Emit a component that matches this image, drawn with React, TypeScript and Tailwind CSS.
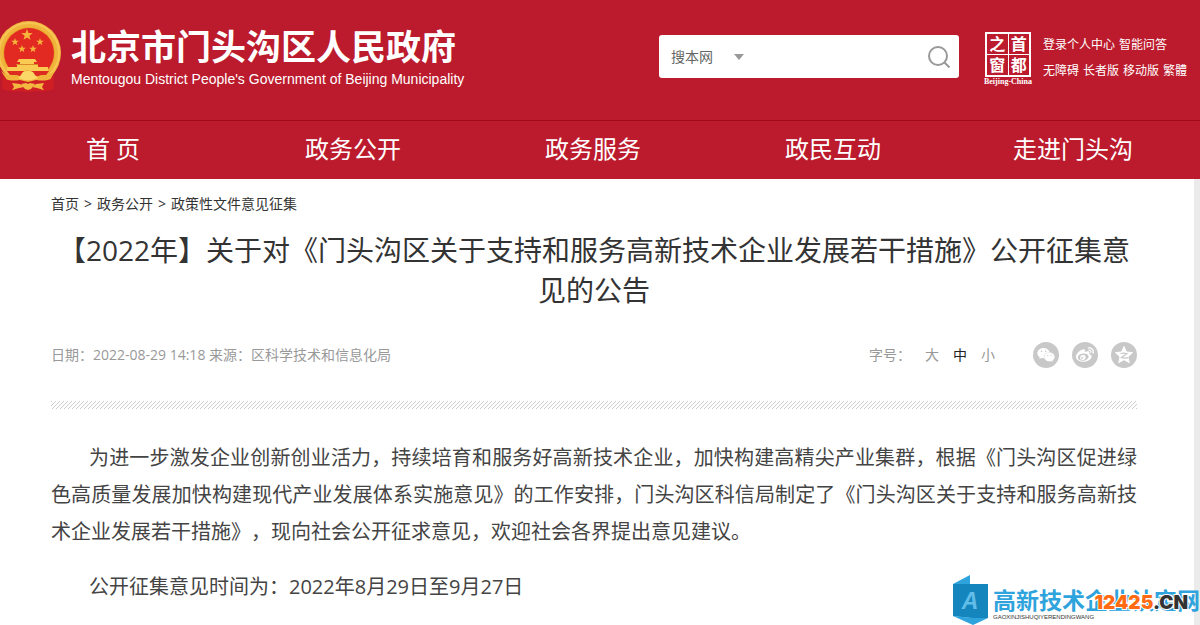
import React, { useState } from "react";
import { FaWeibo, FaWeixin } from "react-icons/fa";

const navItems = ["首 页", "政务公开", "政务服务", "政民互动", "走进门头沟"];
const crumbs = ["首页", "政务公开", "政策性文件意见征集"];
const topLinks = [
  ["登录个人中心", "智能问答"],
  ["无障碍", "长者版", "移动版", "繁體"],
];
const sizes = ["大", "中", "小"];

function star(cx: number, cy: number, r: number) {
  return Array.from({ length: 10 }, (_, i) => {
    const a = (Math.PI / 5) * i - Math.PI / 2;
    const d = i % 2 ? r * 0.4 : r;
    return `${cx + d * Math.cos(a)},${cy + d * Math.sin(a)}`;
  }).join(" ");
}

function Emblem() {
  return (
    <svg viewBox="0 0 62 74" className="h-[74px] w-[62px] shrink-0" aria-hidden="true">
      <path d="M3 46L2 62l1 8 12 1 13 1 13-1 11-1 2-8-1-16z" fill="#cf1f24" />
      <circle cx="29" cy="33" r="32" fill="#f0b43c" />
      <circle cx="29" cy="33" r="30" fill="none" stroke="#f6c653" strokeWidth="2" />
      <circle cx="29" cy="33" r="26" fill="#e8a52c" />
      <circle cx="29" cy="33" r="25" fill="#e32a22" />
      <g fill="#f6b63c">
        <polygon points={star(27, 15, 6)} />
        <polygon points={star(15, 22, 4)} />
        <polygon points={star(40, 22, 4)} />
        <polygon points={star(22, 29, 4)} />
        <polygon points={star(33, 29, 4)} />
      </g>
      <g fill="#f9cb52">
        <path d="M19 39h16l2 3H17zM20 42h14v2H20zM17 44h21v6H17z" />
        <path d="M7 47h41v4H7z" />
      </g>
      <path d="M16 44h22v1H16z" fill="#d98a25" />
      <path d="M7 51h42l-3 4H10z" fill="#dd2b22" />
      <path d="M1 51c6 5 13 6 20 5 1-4 4-6 7-6s5 2 6 6c7 1 14 0 21-5l-5 9-12 3H18L7 60z" fill="#f0b43c" />
      <path d="M18 58l3-3 2-3 4-1h2l4 1 2 3 3 3-6 2h-8z" fill="#fbd768" />
      <path d="M3 58c6 3 10 3 17 2l8 2 8-2c7 1 11 1 17-2l1 11c-8 3-14 3-20 1l-6-2-6 2c-6 2-12 2-20-1z" fill="#cf1f24" />
      <path d="M12 63l8 1 4 3-5 1-7 2 2-3zM44 63l-8 1-4 3 5 1 7 2-2-3zM21 64l5-1 2 1 2-1 5 1-4 5-3 1-3-1z" fill="#f3b840" />
    </svg>
  );
}

function QzoneIcon() {
  return (
    <svg viewBox="0 0 20 20" className="h-5 w-5" aria-hidden="true">
      <path
        d="M10 1.5 L12.4 7 L18.5 7.6 L14 11.7 L15.3 17.7 L10 14.7 L4.7 17.7 L6 11.7 L1.5 7.6 L7.6 7Z"
        fill="#fff"
        stroke="#fff"
        strokeLinejoin="round"
      />
      <path d="M6.500 8.500c2.500-.5 4.500-.5 6.500 0L7.500 12.600c2 .6 4.500 .6 7 0" fill="none" stroke="#c8c8c8" strokeWidth="1.2" />
    </svg>
  );
}

function CapitalWindow() {
  return (
    <a href="#" aria-label="首都之窗" className="flex w-[50px] flex-col items-center text-white">
      <span className="grid h-[45px] w-[46px] grid-cols-2 grid-rows-2 gap-px border-2 border-white bg-white text-[16px] leading-5 font-bold">
        {["之", "首", "窗", "都"].map((c) => (
          <span key={c} className="bg-[#bc1b2d] text-center">
            {c}
          </span>
        ))}
      </span>
      <span className="font-['Liberation_Serif',serif] text-[8px] leading-[10px] font-bold whitespace-nowrap">
        Beijing-China
      </span>
    </a>
  );
}

function SearchBox() {
  const [query, setQuery] = useState("");

  return (
    <form
      onSubmit={(e) => e.preventDefault()}
      className="flex h-[43px] w-[300px] items-center rounded-[3px] bg-white text-sm text-[#666]"
    >
      <div className="relative ml-3 flex items-center">
        <select aria-label="搜索范围" className="w-[76px] appearance-none bg-transparent outline-none">
          <option>搜本网</option>
        </select>
        <svg viewBox="0 0 10 6" className="pointer-events-none absolute right-[3px] h-[6px] w-[10px]" aria-hidden="true">
          <path d="M0 0h10L5 6z" fill="#999" />
        </svg>
      </div>
      <input
        type="text"
        aria-label="搜索"
        value={query}
        onChange={(e) => setQuery(e.target.value)}
        className="min-w-0 flex-1 px-2 outline-none"
      />
      <button type="submit" aria-label="提交搜索" className="mr-2">
        <svg viewBox="0 0 24 24" className="h-6 w-6" fill="none" stroke="#999" strokeWidth="2" aria-hidden="true">
          <circle cx="11" cy="11" r="9" />
          <path d="M17.500 17.500l5 5" />
        </svg>
      </button>
    </form>
  );
}

function Watermark() {
  return (
    <div className="absolute right-0 bottom-0 flex h-[50px] w-[247px]">
      <svg viewBox="0 0 36 50" className="h-[50px] w-[36px] shrink-0" aria-hidden="true">
        <path d="M0 9L17 0v9h18v34L20 50v-7L0 41z" fill="#2ea3dc" />
        <path d="M0 9h35v34H20L0 41z" fill="#1585bd" />
        <path d="M0 41l20 2v7z" fill="#2ea3dc" />
        <text
          x="17"
          y="34"
          textAnchor="middle"
          fill="#62bde8"
          fontFamily="Liberation Sans"
          fontSize="23"
          fontWeight="bold"
          fontStyle="italic"
        >
          A
        </text>
      </svg>
      <div className="ml-1 flex flex-col pt-3 whitespace-nowrap">
        <span className="text-[23px] leading-[26px] font-bold text-[#2ea3dc]">高新技术企业认定网</span>
        <span className="font-['Liberation_Sans',sans-serif] text-[6px] leading-2 text-[#333]">
          GAOXINJISHUQIYERENDINGWANG
        </span>
      </div>
      <span className="absolute right-3 bottom-3 font-[Inter,sans-serif] text-[19px] leading-5 font-black text-[#ff6a13] [paint-order:stroke] [-webkit-text-stroke:2px_white]">
        12425<span className="text-[#333]">.CN</span>
      </span>
    </div>
  );
}

export default function App() {
  const [size, setSize] = useState("中");

  return (
    <div className="relative flex min-h-screen flex-col overflow-hidden bg-[#ebebeb] font-['Open_Sans','Noto_Sans_CJK_SC',sans-serif] text-[#333] [text-spacing-trim:space-all]">
      <header className="bg-[#bc1b2d] text-white">
        <div className="flex h-[120px] items-start justify-between pr-3">
          <div className="flex items-start gap-[9px] pt-5">
            <Emblem />
            <div className="pt-1 whitespace-nowrap">
              <h1 className="text-[35px] leading-[46px] font-bold">北京市门头沟区人民政府</h1>
              <p className="font-['Liberation_Sans',sans-serif] text-[14px] leading-[18px]">
                Mentougou District People's Government of Beijing Municipality
              </p>
            </div>
          </div>
          <div className="flex items-start pt-8">
            <div className="mt-[3px] mr-6">
              <SearchBox />
            </div>
            <CapitalWindow />
            <div className="ml-2.5 w-[145px] text-xs leading-[26px] whitespace-nowrap">
              {topLinks.map((row) => (
                <div key={row[0]} className="flex gap-1">
                  {row.map((label) => (
                    <a key={label} href="#">
                      {label}
                    </a>
                  ))}
                </div>
              ))}
            </div>
          </div>
        </div>
        <nav className="border-t border-[#a00a18]">
          <ul className="mr-[7px] -ml-[7px] grid grid-cols-5 pb-0.5 text-center text-2xl leading-[56px]">
            {navItems.map((item) => (
              <li key={item}>
                <a href="#">{item}</a>
              </li>
            ))}
          </ul>
        </nav>
      </header>

      <main className="mr-[6px] flex-1 bg-white pr-[57px] pl-[51px]">
        <div className="pt-[15px] text-sm">
          {crumbs.map((crumb, i) => (
            <React.Fragment key={crumb}>
              {i > 0 && <span className="px-[5px]">&gt;</span>}
              <a href="#">{crumb}</a>
            </React.Fragment>
          ))}
        </div>

        <h2 className="mt-4 text-center text-[28px] leading-10">
          【2022年】关于对《门头沟区关于支持和服务高新技术企业发展若干措施》公开征集意见的公告
        </h2>

        <div className="mt-8 flex items-center justify-between text-sm text-[#999]">
          <p>日期：2022-08-29 14:18 来源：区科学技术和信息化局</p>
          <div className="flex items-center">
            <span className="mr-3.5">字号：</span>
            <div className="flex gap-3.5">
              {sizes.map((s) => (
                <button key={s} onClick={() => setSize(s)} className={s === size ? "text-[#222]" : ""}>
                  {s}
                </button>
              ))}
            </div>
            <div className="ml-[38px] flex gap-[13px] text-white">
              <button aria-label="微信" className="flex h-[26px] w-[26px] items-center justify-center rounded-full bg-[#c8c8c8]">
                <FaWeixin className="h-[18px] w-[18px]" />
              </button>
              <button aria-label="微博" className="flex h-[26px] w-[26px] items-center justify-center rounded-full bg-[#c8c8c8]">
                <FaWeibo className="h-[18px] w-[18px]" />
              </button>
              <button aria-label="QQ空间" className="flex h-[26px] w-[26px] items-center justify-center rounded-full bg-[#c8c8c8]">
                <QzoneIcon />
              </button>
            </div>
          </div>
        </div>

        <div className="mt-[33px] h-2 bg-[linear-gradient(135deg,#ccc_12.5%,#fff_12.5%,#fff_50%,#ccc_50%,#ccc_62.5%,#fff_62.5%)] bg-[length:4px_4px]" />

        <article className="mt-[30px] text-justify text-xl leading-[37px] text-[#444]">
          <p className="mb-[18px] indent-[38px]">
            为进一步激发企业创新创业活力，持续培育和服务好高新技术企业，加快构建高精尖产业集群，根据《门头沟区促进绿色高质量发展加快构建现代产业发展体系实施意见》的工作安排，门头沟区科信局制定了《门头沟区关于支持和服务高新技术企业发展若干措施》，现向社会公开征求意见，欢迎社会各界提出意见建议。
          </p>
          <p className="indent-[38px]">公开征集意见时间为：2022年8月29日至9月27日</p>
        </article>
      </main>

      <Watermark />
    </div>
  );
}
